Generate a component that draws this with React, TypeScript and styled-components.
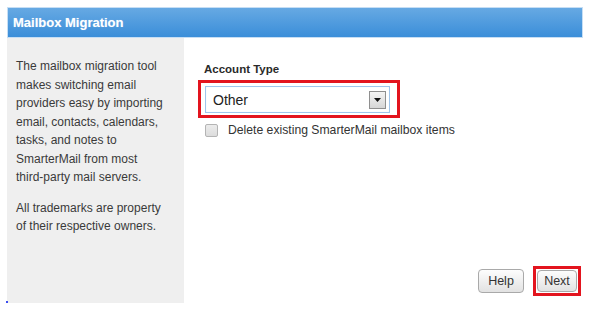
import styled, { createGlobalStyle } from "styled-components";

const GlobalStyle = createGlobalStyle`
  html, body {
    margin: 0;
    padding: 0;
    background: #fff;
  }
  body {
    font-family: "Liberation Sans", Arial, sans-serif;
    color: #333;
  }
`;

const Page = styled.div`
  width: 601px;
  height: 314px;
  padding: 7px 0 0 7px;
  box-sizing: border-box;
  position: relative;
`;

const Panel = styled.div`
  width: 576px;
  display: flex;
  flex-direction: column;
`;

const Header = styled.div`
  height: 31px;
  box-sizing: border-box;
  display: flex;
  align-items: center;
  padding-left: 5px;
  background: linear-gradient(#66a9e3, #3b8ed9);
  border: 1px solid #c6def4;
  color: #fff;
  font-weight: bold;
  font-size: 13px;
  text-shadow: 0 0 1px rgba(255, 255, 255, 0.4);
`;

const Body = styled.div`
  display: flex;
  height: 265px;
`;

const Sidebar = styled.div`
  width: 177px;
  box-sizing: border-box;
  background: #efefef;
  padding: 19px 13px 0 9px;
  font-size: 12px;
  line-height: 18.5px;
  color: #3a3a3a;
`;

const Para = styled.p`
  margin: 0 0 12px;
`;

const NoWrap = styled.span`
  white-space: nowrap;
`;

const Content = styled.div`
  flex: 1;
  display: flex;
  flex-direction: column;
  padding: 24px 0 0 14px;
  min-width: 0;
`;

const Label = styled.div`
  font-weight: bold;
  font-size: 11.5px;
  color: #2a2a2a;
  padding-left: 6px;
  line-height: 14px;
`;

const Highlight = styled.div`
  border: 3px solid #e3141e;
  box-sizing: border-box;
`;

const SelectWrap = styled(Highlight)`
  width: 202px;
  height: 38px;
  margin-top: 4px;
  padding: 3px 7px 0 4px;
`;

const Select = styled.div`
  height: 27px;
  box-sizing: border-box;
  border: 1px solid #9fc5ec;
  box-shadow: inset 0 0 1px #cfe3f7;
  background: #fff;
  display: flex;
  align-items: center;
  justify-content: space-between;
  padding: 0 3px 0 7px;
  font-size: 14px;
  color: #222;
`;

const Arrow = styled.div`
  width: 17px;
  height: 18px;
  box-sizing: border-box;
  border: 1px solid #8f8f8f;
  background: linear-gradient(#f4f4f4, #d6d6d6);
  display: flex;
  align-items: center;
  justify-content: center;
`;

const CheckRow = styled.label`
  display: flex;
  align-items: center;
  gap: 10px;
  margin: 5px 0 0 7px;
  font-size: 12.2px;
  color: #333;
`;

const Box = styled.span`
  width: 13px;
  height: 13px;
  box-sizing: border-box;
  border: 1px solid #b4b4b4;
  border-radius: 2px;
  background: linear-gradient(#ececec, #dcdcdc);
`;

const Footer = styled.div`
  margin-top: auto;
  display: flex;
  justify-content: flex-end;
  align-items: center;
  gap: 9px;
  padding: 0 2px 7px 0;
`;

const Button = styled.button<{ $w: number; $h: number }>`
  width: ${(p) => p.$w}px;
  height: ${(p) => p.$h}px;
  padding: 0;
  box-sizing: border-box;
  border: 1px solid #a9a9a9;
  border-radius: 4px;
  background: linear-gradient(#fdfdfd, #e2e2e2);
  font-family: "Liberation Sans", Arial, sans-serif;
  font-size: 12.5px;
  color: #333;
  cursor: pointer;
`;

const NextWrap = styled(Highlight)`
  padding: 1px;
`;

const Dot = styled.span`
  position: absolute;
  left: 6px;
  top: 301px;
  width: 2px;
  height: 2px;
  background: #3a4cf0;
`;

export default function App() {
  return (
    <Page>
      <GlobalStyle />
      <Panel>
        <Header>Mailbox Migration</Header>
        <Body>
          <Sidebar>
            <Para>
              The mailbox migration tool makes switching email providers easy by
              importing email, contacts, calendars, tasks, and notes to
              SmarterMail from most <NoWrap>third-party</NoWrap> mail servers.
            </Para>
            <Para>All trademarks are property of their respective owners.</Para>
          </Sidebar>
          <Content>
            <Label>Account Type</Label>
            <SelectWrap>
              <Select>
                <span>Other</span>
                <Arrow>
                  <svg width="7" height="4" viewBox="0 0 7 4">
                    <path d="M0 0h7L3.5 4z" fill="#111" />
                  </svg>
                </Arrow>
              </Select>
            </SelectWrap>
            <CheckRow>
              <Box />
              Delete existing SmarterMail mailbox items
            </CheckRow>
            <Footer>
              <Button $w={46} $h={24}>Help</Button>
              <NextWrap>
                <Button $w={40} $h={22}>Next</Button>
              </NextWrap>
            </Footer>
          </Content>
        </Body>
      </Panel>
      <Dot />
    </Page>
  );
}
